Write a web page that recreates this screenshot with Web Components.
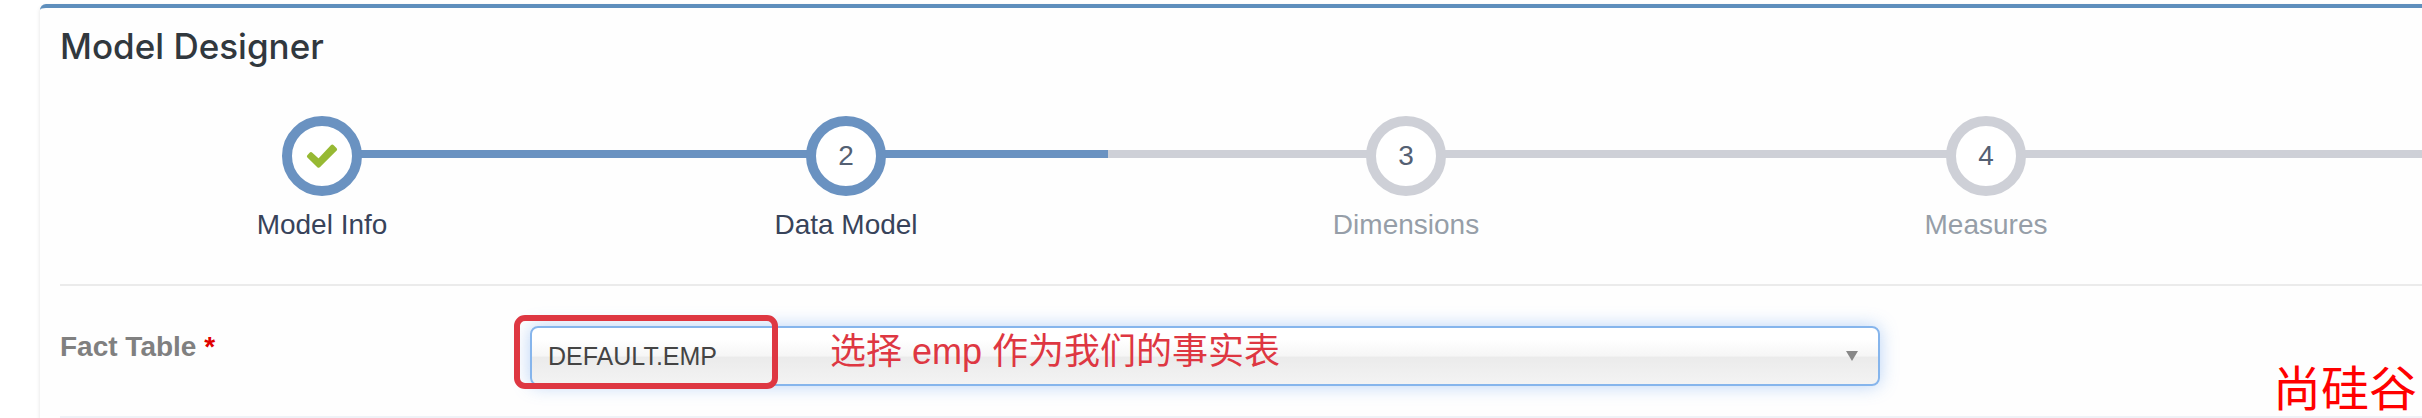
<!DOCTYPE html>
<html lang="en">
<head>
<meta charset="utf-8">
<title>Model Designer</title>
<style>
body { margin: 0; padding-top: 4px; background: #fff; font-family: "Liberation Sans", Arial, sans-serif; overflow-x: hidden; }
</style>
</head>
<body>
<designer-card heading="Model Designer">
  <wizard-steps>
    <wizard-step label="Model Info" state="complete"></wizard-step>
    <wizard-step label="Data Model" state="active">2</wizard-step>
    <wizard-step label="Dimensions">3</wizard-step>
    <wizard-step label="Measures">4</wizard-step>
    <wizard-rest></wizard-rest>
  </wizard-steps>
  <fact-table-field></fact-table-field>
</designer-card>
<brand-mark>尚硅谷</brand-mark>

<script>
class ShadowElement extends HTMLElement {
  constructor() {
    super();
    this.attachShadow({ mode: "open" });
  }
  connectedCallback() {
    this.shadowRoot.innerHTML = this.render();
  }
}

customElements.define("designer-card", class extends ShadowElement {
  render() {
    return `<style>
      :host { display: block; margin-left: 40px; padding-left: 20px; background: #fefefe;
        border-top: 4px solid #5f8fbd; border-top-left-radius: 6px; box-shadow: 0 2px 4px rgba(0,0,0,.12); }
      h1 { margin: 0; padding: 16px 0 48px; font-size: 35px; line-height: 44px; font-weight: 500; color: #31383e;
        font-family: Inter, "Liberation Sans", sans-serif; }
    </style>
    <h1>${this.getAttribute("heading")}</h1>
    <slot></slot>`;
  }
});

customElements.define("wizard-steps", class extends ShadowElement {
  render() {
    return `<style>
      :host { display: grid; grid-template-columns: 524fr 524fr 596fr 564fr 154fr; height: 168px;
        border-bottom: 2px solid #ebebeb; }
    </style>
    <slot></slot>`;
  }
});

customElements.define("wizard-step", class extends ShadowElement {
  render() {
    const mark = this.getAttribute("state") === "complete"
      ? `<svg width="32" height="25" viewBox="0 0 32 25" role="img" aria-label="Complete">
          <path d="M3 12.3 5 10.2 12.7 17.2 26.3 2.7 29 5.4 12.7 21.7Z" fill="#97b933" stroke="#97b933" stroke-width="4" stroke-linejoin="round"/>
        </svg>`
      : `<slot></slot>`;
    return `<style>
      :host { display: block; --line: #ced0d7; --text: #969ea8; }
      :host([state]) { --line: #6a92c1; --text: #38435a; }
      .track { display: grid; grid-template-columns: 1fr 78px 1fr; }
      .bar { height: 8px; margin-top: 34px; background: var(--line); }
      :host([state="complete"]) .bar:first-child { background: none; }
      .ring { box-sizing: border-box; width: 80px; height: 80px; margin: 0 -1px; border: 10px solid var(--line);
        border-radius: 50%; background: #fff; z-index: 1;
        display: flex; align-items: center; justify-content: center; font-size: 28px; line-height: 32px; color: #546073; }
      .label { padding-top: 13px; text-align: center; font-size: 28px; line-height: 32px; color: var(--text); }
    </style>
    <div class="track"><div class="bar"></div><div class="ring">${mark}</div><div class="bar"></div></div>
    <div class="label">${this.getAttribute("label")}</div>`;
  }
});

customElements.define("wizard-rest", class extends ShadowElement {
  render() {
    return `<style>
      :host { display: block; }
      div { height: 8px; margin-top: 34px; background: #ced0d7; }
    </style><div></div>`;
  }
});

customElements.define("fact-table-field", class extends ShadowElement {
  render() {
    return `<style>
      :host { display: grid; grid-template-columns: 470fr 1350fr 542fr; align-items: start; padding: 40px 0 30px;
        border-bottom: 2px solid #eff2f7; }
      label { padding-top: 5px; font-size: 28px; line-height: 32px; font-weight: bold; color: #808080; }
      label span { color: #e00000; }
      .control { position: relative; }
      select { appearance: none; display: block; box-sizing: border-box; width: 100%; height: 60px; margin: 0;
        padding: 0 48px 0 16px; border: 2px solid #86b5ec; border-radius: 8px; outline: none;
        background: linear-gradient(#fff 20%, #f6f6f6 50%, #ebebeb 52%, #f3f3f3 100%);
        box-shadow: 0 0 18px rgba(82,148,236,.4); color: #444;
        font-family: inherit; font-size: 25px; line-height: 32px; }
      .arrow { position: absolute; right: 22px; top: 25px; pointer-events: none; }
      .frame { position: absolute; left: -16px; top: -11px; box-sizing: border-box; width: 264px; height: 74px;
        border: 6px solid #de3742; border-radius: 11px; pointer-events: none; }
      .note { position: absolute; left: 300px; top: 2px; font-size: 36px; line-height: 48px; color: #de3742;
        font-family: "Liberation Sans", "Noto Sans CJK SC", sans-serif; white-space: nowrap; pointer-events: none; }
    </style>
    <label for="fact">Fact Table <span>*</span></label>
    <div class="control">
      <select id="fact"><option>DEFAULT.EMP</option></select>
      <svg class="arrow" width="12" height="10" viewBox="0 0 12 10" aria-hidden="true"><path d="M0 0H12L6 10Z" fill="#888"/></svg>
      <div class="frame"></div>
      <div class="note" lang="zh-CN">选择 emp 作为我们的事实表</div>
    </div>`;
  }
});

customElements.define("brand-mark", class extends ShadowElement {
  render() {
    return `<style>
      :host { position: absolute; right: 5px; top: 362px; font-size: 48px; line-height: 56px; color: #f00;
        font-family: "Liberation Sans", KaiTi, STKaiti, "Noto Sans CJK SC", serif; }
    </style><slot></slot>`;
  }
});
</script>
</body>
</html>
